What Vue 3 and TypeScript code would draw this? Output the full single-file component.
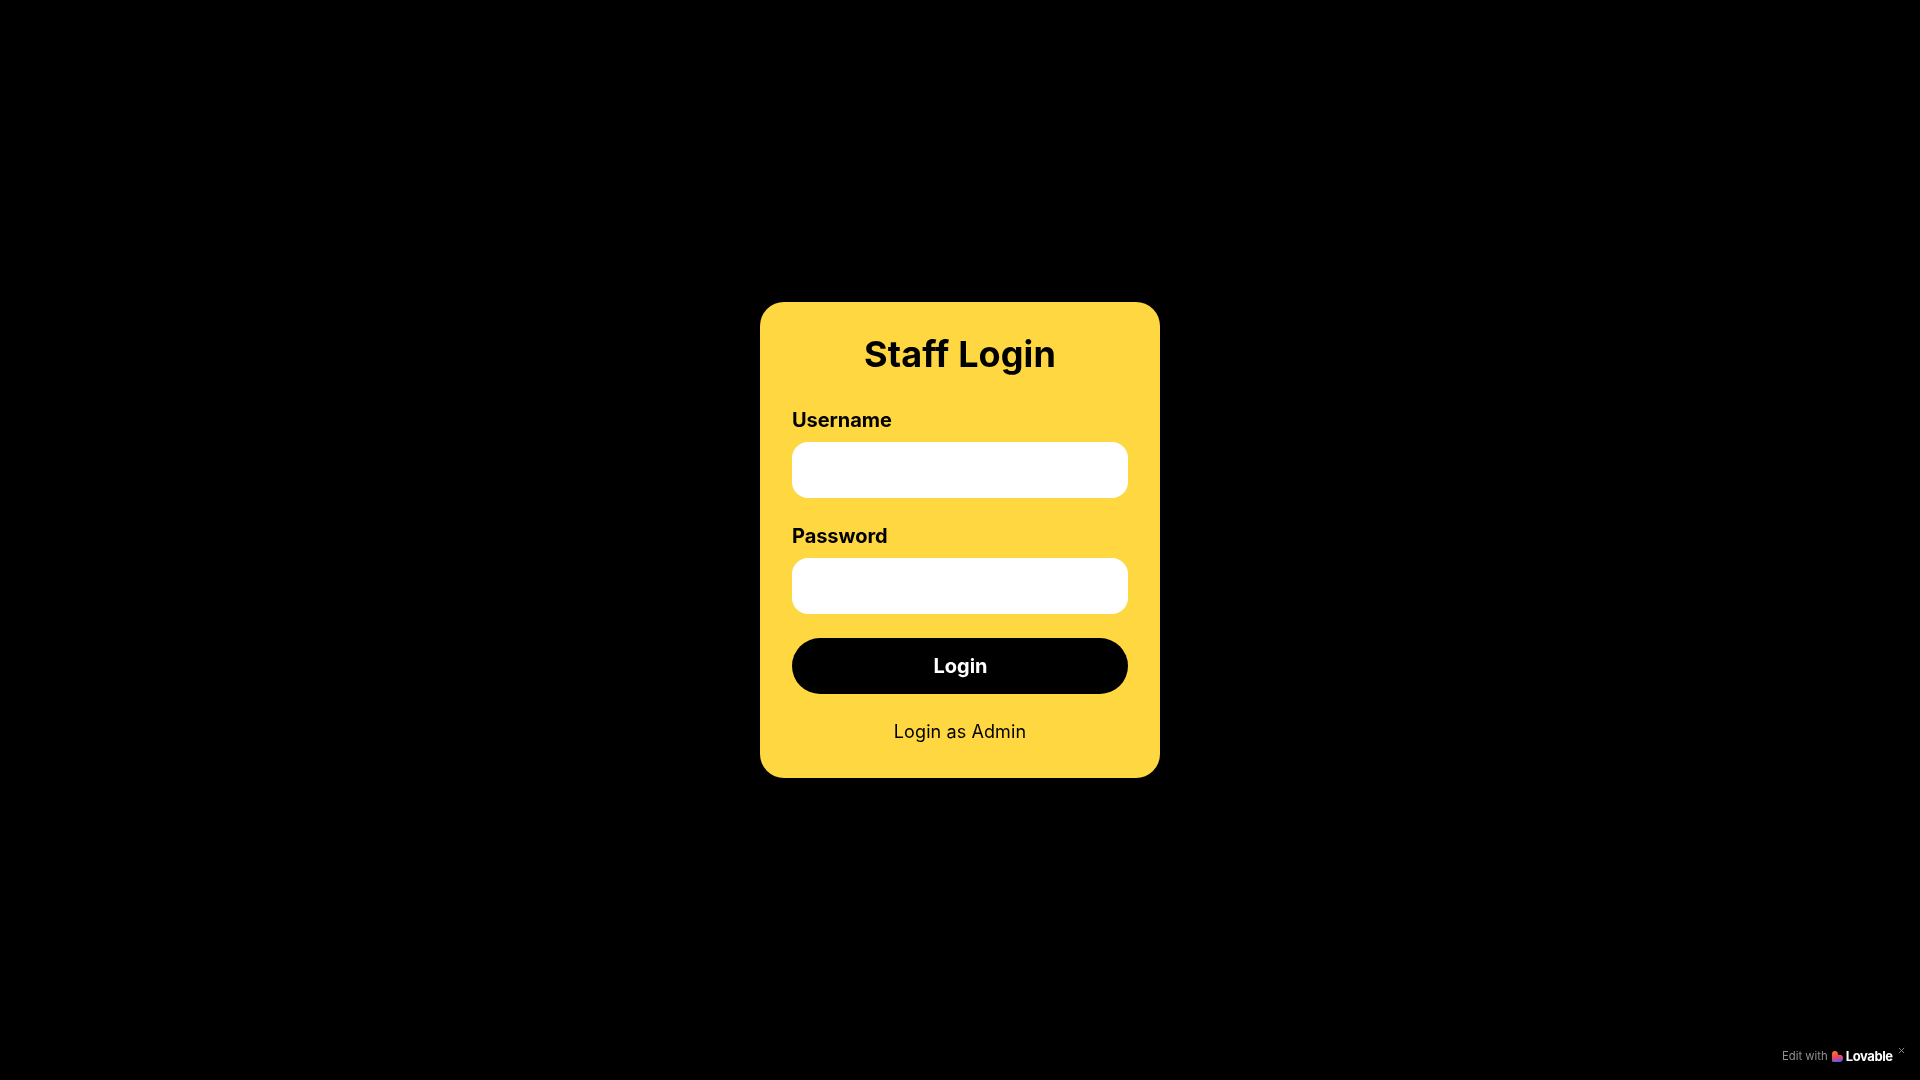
<script setup lang="ts">
import { ref } from 'vue'
const username = ref('')
const password = ref('')
</script>

<template>
  <main class="page">
    <form class="card" @submit.prevent>
      <h1 class="title">Staff Login</h1>
      <div class="field">
        <label class="label" for="username">Username</label>
        <input id="username" v-model="username" class="input" type="text" />
      </div>
      <div class="field">
        <label class="label" for="password">Password</label>
        <input id="password" v-model="password" class="input" type="password" />
      </div>
      <button class="submit" type="submit">Login</button>
      <button class="admin" type="button">Login as Admin</button>
    </form>
    <div class="badge">
      <span class="edit">Edit with</span>
      <svg class="heart" viewBox="0 0 12 12" width="11" height="11" aria-hidden="true">
        <defs>
          <linearGradient id="lov" x1="0.3" y1="0" x2="0.5" y2="1">
            <stop offset="0" stop-color="#ff7a1c" />
            <stop offset="0.55" stop-color="#f5405a" />
            <stop offset="1" stop-color="#4f60f5" />
          </linearGradient>
        </defs>
        <path fill="url(#lov)" d="M3.2 0a3.2 3.2 0 0 1 3.2 3.2v0.9h1.9a3.7 3.7 0 0 1 3.7 3.9a4 4 0 0 1-4 4H1.5A1.5 1.5 0 0 1 0 10.5V3.2A3.2 3.2 0 0 1 3.2 0z" />
      </svg>
      <span class="brand">Lovable</span>
      <svg class="close" viewBox="0 0 8 8" width="7" height="7" aria-hidden="true">
        <path d="M1 1l6 6M7 1l-6 6" stroke="#9a9a9a" stroke-width="1" fill="none" />
      </svg>
    </div>
  </main>
</template>

<style>
html, body { margin: 0; background: #000; }
</style>

<style scoped>
.page {
  position: relative;
  min-height: 100vh;
  display: flex;
  align-items: center;
  justify-content: center;
  background: #000;
  font-family: Inter, "Liberation Sans", sans-serif;
}
.card {
  width: 400px;
  box-sizing: border-box;
  padding: 32px;
  background: #ffd740;
  border-radius: 24px;
  display: flex;
  flex-direction: column;
  gap: 24px;
  will-change: transform;
}
.title {
  margin: 0 0 8px;
  font-size: 36px;
  line-height: 40px;
  font-weight: 750;
  letter-spacing: 0.1px;
  color: #000;
  text-align: center;
}
.field { display: flex; flex-direction: column; gap: 8px; }
.label {
  font-size: 20px;
  line-height: 28px;
  font-weight: 700;
  letter-spacing: -0.05px;
  color: #000;
}
.input {
  height: 56px;
  box-sizing: border-box;
  border: 0;
  border-radius: 16px;
  background: #fff;
  padding: 0 16px;
  font: inherit;
  outline: none;
}
.submit {
  height: 56px;
  border: 0;
  border-radius: 28px;
  background: #000;
  color: #fff;
  font-family: inherit;
  font-size: 20px;
  font-weight: 700;
  letter-spacing: -0.05px;
  padding: 0 0 0 1px;
}
.admin {
  border: 0;
  background: none;
  padding: 0;
  color: #000;
  font-family: inherit;
  font-size: 18px;
  line-height: 28px;
  font-weight: 400;
  letter-spacing: 0.1px;
  text-align: center;
}
.badge {
  position: absolute;
  right: 27.5px;
  bottom: 16px;
  display: flex;
  align-items: center;
  font-size: 11.3px;
  line-height: 16px;
  will-change: transform;
}
.edit { color: #8f8f8f; margin-right: 4px; }
.heart { margin-right: 3px; }
.brand { color: #fff; font-weight: 700; font-size: 13px; letter-spacing: -0.4px; }
.close { position: absolute; right: -12px; top: -1px; }
</style>
